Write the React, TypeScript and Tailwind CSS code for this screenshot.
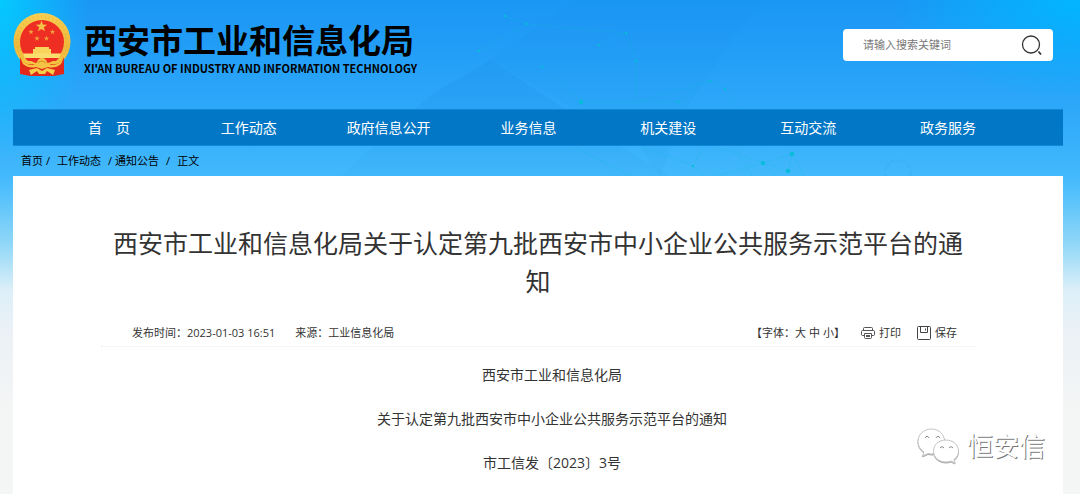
import { useState } from 'react'

const navItems = [
  '首\u3000页',
  '工作动态',
  '政府信息公开',
  '业务信息',
  '机关建设',
  '互动交流',
  '政务服务',
]

const star = (cx: number, cy: number, r: number) =>
  Array.from({ length: 10 }, (_, i) => {
    const radius = i % 2 ? r * 0.4 : r
    const angle = (Math.PI / 5) * i - Math.PI / 2
    return `${cx + radius * Math.cos(angle)},${cy + radius * Math.sin(angle)}`
  }).join(' ')

function Emblem() {
  return (
    <svg viewBox="0 0 58 63" className="h-[63px] w-[58px] shrink-0">
      <defs>
        <linearGradient id="gold" x1="0" y1="0" x2="0" y2="1">
          <stop offset="0" stopColor="#f8cf52" />
          <stop offset="0.6" stopColor="#eeb83c" />
          <stop offset="1" stopColor="#f7cd45" />
        </linearGradient>
      </defs>
      <circle cx="29" cy="28.5" r="28.5" fill="url(#gold)" />
      <circle
        cx="29"
        cy="28.5"
        r="25"
        fill="none"
        stroke="#e0a02c"
        strokeWidth="3"
        strokeDasharray="1 3"
        opacity="0.3"
      />
      <circle cx="29" cy="29" r="22" fill="#ee2e23" />
      <polygon points={star(28.5, 13.5, 6)} fill="#f5c146" />
      <polygon points={star(18, 19, 2.8)} fill="#f3a23c" />
      <polygon points={star(39.5, 19, 2.8)} fill="#f3a23c" />
      <polygon points={star(24, 25.5, 2.8)} fill="#f3a23c" />
      <polygon points={star(33.5, 25.5, 2.8)} fill="#f3a23c" />
      <path d="M22 34 H36 V36 H38 V41 H20 V36 H22 Z" fill="#f9d45c" />
      <path d="M10 40.5 H48 L46 45 H12 Z" fill="#fbdf6e" />
      <path d="M12 45 H46 L43 48 H36 L29 45.5 L22 48 H15 Z" fill="#ee2e23" />
      <path
        d="M7 44 Q11 53 22 51 L29 54 L36 51 Q47 53 51 44 L51 61 L41 63 L40 57 L29 60 L18 57 L17 63 L7 61 Z"
        fill="#e3281c"
      />
      <path
        d="M6 42 Q10 52 20 52 L29 46 L38 52 Q48 52 52 42 L48 51 Q42 56 35 54 L29 56 L23 54 Q16 56 10 51 Z"
        fill="#f6c443"
      />
      <circle cx="29" cy="50" r="5" fill="#f4c244" />
      <path d="M25 50 Q29 46 33 50" fill="none" stroke="#d9902a" strokeWidth="1" />
      <path d="M18 58 H40 L41 63 H17 Z" fill="#e3281c" />
      <path d="M16 57 L24 55 L29 58 L34 55 L42 57 L40 62 L34 58 L32 61 H26 L24 58 L18 62 Z" fill="#f8ce48" />
    </svg>
  )
}

function Backdrop() {
  const nodes = [
    [505, 16, 1],
    [527, 24, 1],
    [626, 33, 1],
    [599, 45, 1],
    [479, 51, 1],
    [636, 61, 1],
    [542, 67, 1],
    [710, 81, 1],
    [725, 89, 1],
    [581, 102, 2],
    [678, 102, 1],
    [693, 166, 1],
    [763, 163, 2],
    [792, 154, 2],
    [788, 171, 2],
  ]
  return (
    <svg
      viewBox="0 0 1080 176"
      preserveAspectRatio="xMidYMin slice"
      className="pointer-events-none absolute inset-x-0 top-0 h-44 w-full"
      aria-hidden="true"
    >
      <defs>
        <linearGradient id="shade" x1="0" y1="0" x2="0" y2="1">
          <stop offset="0" stopColor="#0b74d0" stopOpacity="0.12" />
          <stop offset="1" stopColor="#0b74d0" stopOpacity="0.04" />
        </linearGradient>
      </defs>
      <path d="M575 0 L760 0 L690 102 L660 176 L640 146 L491 60 Z" fill="#0b83e0" opacity="0.06" />
      <path d="M491 60 L620 146 L670 176 L340 176 L432 94 Z" fill="url(#shade)" />
      <g stroke="#10bcd4" strokeWidth="1" fill="none" opacity="0.25">
        <path d="M505 16 L527 24 L626 33 M527 24 L479 51 M599 45 L626 33 L636 61" />
        <path d="M636 61 L636 102 L710 81 L725 89 L760 146 M542 67 L581 102 L678 102 L710 81" />
        <path d="M570 145 L630 176 M705 145 L693 166 L640 146 M693 166 L705 176 M715 176 L763 163 L792 154 L788 171 L763 163 L715 146 M735 146 L752 176 M792 154 L804 176 M763 163 L775 176" />
      </g>
      {nodes.map(([x, y, r]) => (
        <circle key={`${x}-${y}`} cx={x} cy={y} r={r + 0.3} fill="#06bcd8" opacity="0.9" />
      ))}
      <circle
        cx="898"
        cy="173"
        r="13"
        fill="none"
        stroke="#2ba3ee"
        strokeWidth="3"
        strokeDasharray="4 2"
        opacity="0.2"
      />
    </svg>
  )
}

function PrintIcon() {
  return (
    <svg viewBox="0 0 14 14" className="size-[14px]" fill="none" stroke="#555" strokeWidth="1">
      <path d="M2.5 4 V2.5 Q2.5 1.5 3.5 1.5 H10.5 Q11.5 1.5 11.5 2.5 V4" />
      <path d="M3 9.5 H1.5 Q0.5 9.5 0.5 8.5 V5.5 Q0.5 4.5 1.5 4.5 H12.5 Q13.5 4.5 13.5 5.5 V8.5 Q13.5 9.5 12.5 9.5 H11" />
      <path d="M3.5 7.5 H10.5 V11.5 Q10.5 12.5 9.5 12.5 H4.5 Q3.5 12.5 3.5 11.5 Z M5 9.5 H9 M5 10.5 H9" />
    </svg>
  )
}

function SaveIcon() {
  return (
    <svg viewBox="0 0 14 14" className="size-[14px]" fill="none" stroke="#444" strokeWidth="1">
      <rect x="0.5" y="0.5" width="13" height="13" rx="1" />
      <path d="M3.5 1 V6.5 H10.5 V1 M8.5 2.5 V4.5" />
    </svg>
  )
}

function Watermark() {
  return (
    <div className="absolute right-[18px] bottom-[30px] flex items-center gap-2">
      <svg
        viewBox="0 0 42 36"
        className="h-9 w-[42px] drop-shadow-[0_1px_0_#aaa]"
        fill="#fff"
        stroke="#c4c4c4"
        strokeWidth="1"
      >
        <path d="M14.5 1 C6.5 1 1 6.5 1 13.5 C1 18 3.5 21.5 7 24 L5.5 28 L11 25.5 Q13 26 16 26 L28 14 C27 6 22 1 14.5 1 Z" />
        <path d="M29 12 C21.5 12 16.5 17 16.5 23 C16.5 29.5 22 34 29 34 Q32 34 34 33 L38 35 L37 31.5 C40 29.5 41.5 26.5 41.5 23 C41.5 17 36 12 29 12 Z" />
        <path
          d="M8 10 Q10 6.5 12 10 M19 10 Q21 6.5 23 10 M23 20 Q25 17 27 20 M32 20 Q34 17 36 20"
          fill="none"
          stroke="#888"
        />
      </svg>
      <span className="text-[26px] leading-8 text-white [text-shadow:1px_1px_0_#777]">
        恒安信
      </span>
    </div>
  )
}

export default function App() {
  const [keyword, setKeyword] = useState('')
  const [size, setSize] = useState('小')

  return (
    <div
      className="relative flex min-h-screen flex-col overflow-hidden pr-[17px] pl-[13px]
        font-['Open_Sans','Noto_Sans_CJK_SC',sans-serif]
        bg-[radial-gradient(ellipse_90px_160px_at_0_0,#04c9ff,transparent),radial-gradient(ellipse_190px_100px_at_100%_0,#02b6ff,transparent),linear-gradient(#1a96f5_0px,#2ca7f9_105px,#43b9fc_176px,#55c1fb_195px,#92d8f8_245px,#dceff8_290px,#ebf1f6_330px,#f4f5f5_410px)]"
    >
      <Backdrop />
      <header className="relative flex h-[109px] items-start justify-between pr-[10px] pt-[13px]">
        <div className="flex items-start gap-[13px]">
          <Emblem />
          <div className="flex flex-col pt-2 text-black">
            <h1 className="text-[33px] leading-10 font-bold">西安市工业和信息化局</h1>
            <p className="font-['Noto_Sans_CJK_SC',sans-serif] text-[11px] leading-[14px] font-bold">
              XI'AN BUREAU OF INDUSTRY AND INFORMATION TECHNOLOGY
            </p>
          </div>
        </div>
        <form
          className="mt-4 flex h-8 w-[210px] items-center rounded bg-white pr-[9px] pl-5"
          onSubmit={(e) => e.preventDefault()}
        >
          <input
            type="text"
            aria-label="请输入搜索关键词"
            placeholder="请输入搜索关键词"
            className="min-w-0 flex-1 text-[11px] outline-none placeholder:text-[#777]"
            value={keyword}
            onChange={(e) => setKeyword(e.target.value)}
          />
          <button type="submit" aria-label="搜索" className="cursor-pointer">
            <svg viewBox="0 0 24 24" className="size-6" fill="none" stroke="#333" strokeWidth="1.3">
              <circle cx="11" cy="11.5" r="8.5" />
              <path d="M18.5 18.5 L21 21.5" strokeWidth="1.8" />
            </svg>
          </button>
        </form>
      </header>

      <nav
        className="relative grid h-[37px] grid-cols-7 items-center border-y border-[#1288d8] bg-[#0277c6]
          pr-[45px] pl-[26px] text-center text-[14px] text-white"
      >
        {navItems.map((item) => (
          <a key={item} href="#" className="whitespace-nowrap">
            {item}
          </a>
        ))}
      </nav>

      <div className="relative flex h-[30px] items-center gap-[3px] px-2 text-[11px] text-black">
        <a href="#">首页</a>
        <span>/</span>
        <a href="#" className="ml-1">
          工作动态
        </a>
        <span className="ml-1">/</span>
        <a href="#">通知公告</a>
        <span className="ml-1">/</span>
        <span className="ml-1">正文</span>
      </div>

      <main className="relative flex-1 bg-white px-[88px] pt-12 pb-4 text-[#333]">
        <h2 className="px-2 text-center text-[25px] leading-[38px]">
          西安市工业和信息化局关于认定第九批西安市中小企业公共服务示范平台的通知
        </h2>
        <div
          className="mt-5 flex h-[27px] items-center justify-between border-b border-dotted
            border-[#ebebeb] pr-[18px] pl-[31px] text-[11px]"
        >
          <div className="flex gap-5">
            <span>发布时间：2023-01-03 16:51</span>
            <span>来源：工业信息化局</span>
          </div>
          <div className="flex items-center gap-4">
            <div className="flex">
              【字体：
              <span className="flex gap-[3px]">
                {['大', '中', '小'].map((s) => (
                  <button
                    key={s}
                    type="button"
                    aria-pressed={size === s}
                    className="cursor-pointer"
                    onClick={() => setSize(s)}
                  >
                    {s}
                  </button>
                ))}
              </span>
              】
            </div>
            <button type="button" className="flex cursor-pointer items-center gap-1">
              <PrintIcon />
              打印
            </button>
            <button type="button" className="flex cursor-pointer items-center gap-1">
              <SaveIcon />
              保存
            </button>
          </div>
        </div>
        <article className="mt-[14px] flex flex-col gap-4 text-center indent-7 text-[14px] leading-7">
          <p>西安市工业和信息化局</p>
          <p>关于认定第九批西安市中小企业公共服务示范平台的通知</p>
          <p>市工信发〔2023〕3号</p>
        </article>
        <Watermark />
      </main>
    </div>
  )
}
